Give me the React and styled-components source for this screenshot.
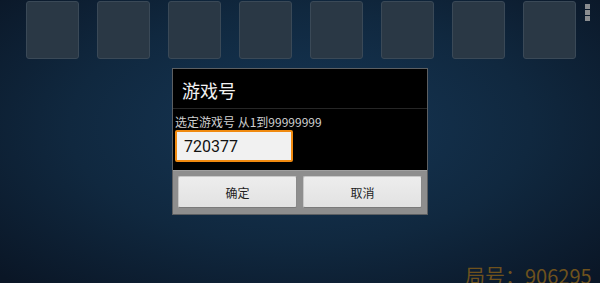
import React from 'react'
import styled, { createGlobalStyle } from 'styled-components'

const GlobalStyle = createGlobalStyle`
  html, body {
    margin: 0;
    padding: 0;
    background: #0b1828;
  }
  * {
    box-sizing: border-box;
  }
`

const Screen = styled.div`
  position: relative;
  display: flex;
  flex-direction: column;
  align-items: center;
  width: 600px;
  height: 283px;
  overflow: hidden;
  background: radial-gradient(ellipse 70% 75% at 50% 45%, #163756 0%, #10283f 55%, #0a1626 100%);
  font-family: "Noto Sans CJK SC", "Noto Sans", sans-serif;
`

const TileRow = styled.div`
  display: flex;
  gap: 18px;
  align-self: flex-start;
  margin: 1px 0 0 26px;
`

const Tile = styled.div`
  width: 53px;
  height: 58px;
  border-radius: 3px;
  border: 1px solid #3a4957;
  background: #2a3845;
`

const MenuDots = styled.div`
  position: absolute;
  top: 4px;
  right: 10px;
  display: flex;
  flex-direction: column;
  gap: 1px;

  span {
    width: 5px;
    height: 5px;
    background: #8a8d90;
  }
`

const Dialog = styled.div`
  display: flex;
  flex-direction: column;
  width: 256px;
  margin-top: 9px;
  border: 1px solid #5c5f62;
  background: #000;
`

const Title = styled.div`
  height: 40px;
  padding: 2px 0 0 9px;
  display: flex;
  align-items: center;
  color: #f2f2f2;
  font-size: 18px;
  border-bottom: 1px solid #262626;
`

const Body = styled.div`
  display: flex;
  flex-direction: column;
  padding: 5px 0 8px 2px;
`

const Hint = styled.div`
  color: #cfcfcf;
  font-size: 12px;
  line-height: 16px;
`

const Input = styled.div`
  width: 118px;
  height: 32px;
  display: flex;
  align-items: center;
  padding-left: 7px;
  background: #f1f1f1;
  border: 2px solid #f08a10;
  border-radius: 2px;
  color: #111;
  font-size: 16px;
  font-family: "Roboto", "Noto Sans", sans-serif;
`

const ButtonBar = styled.div`
  display: flex;
  gap: 6px;
  padding: 5px 5px 6px 5px;
  background: #8e8e8e;
  border-top: 1px solid #a0a0a0;
`

const Button = styled.div`
  flex: 1;
  height: 32px;
  display: flex;
  align-items: center;
  justify-content: center;
  background: linear-gradient(#ededed, #e2e2e2);
  border: 1px solid #c8c8c8;
  border-bottom-color: #7a7a7a;
  border-right-color: #8a8a8a;
  border-radius: 2px;
  color: #1e1e1e;
  font-size: 12px;
`

const RoomLabel = styled.div`
  position: absolute;
  left: 465px;
  top: 263px;
  color: #6e521d;
  font-size: 20px;
  line-height: 26px;
  white-space: nowrap;
`

export default function App() {
  return (
    <>
      <GlobalStyle />
      <Screen>
        <TileRow>
          {Array.from({ length: 8 }).map((_, i) => (
            <Tile key={i} />
          ))}
        </TileRow>
        <MenuDots>
          <span />
          <span />
          <span />
        </MenuDots>
        <Dialog>
          <Title>游戏号</Title>
          <Body>
            <Hint>选定游戏号 从1到99999999</Hint>
            <Input>720377</Input>
          </Body>
          <ButtonBar>
            <Button>确定</Button>
            <Button>取消</Button>
          </ButtonBar>
        </Dialog>
        <RoomLabel>局号：906295</RoomLabel>
      </Screen>
    </>
  )
}
